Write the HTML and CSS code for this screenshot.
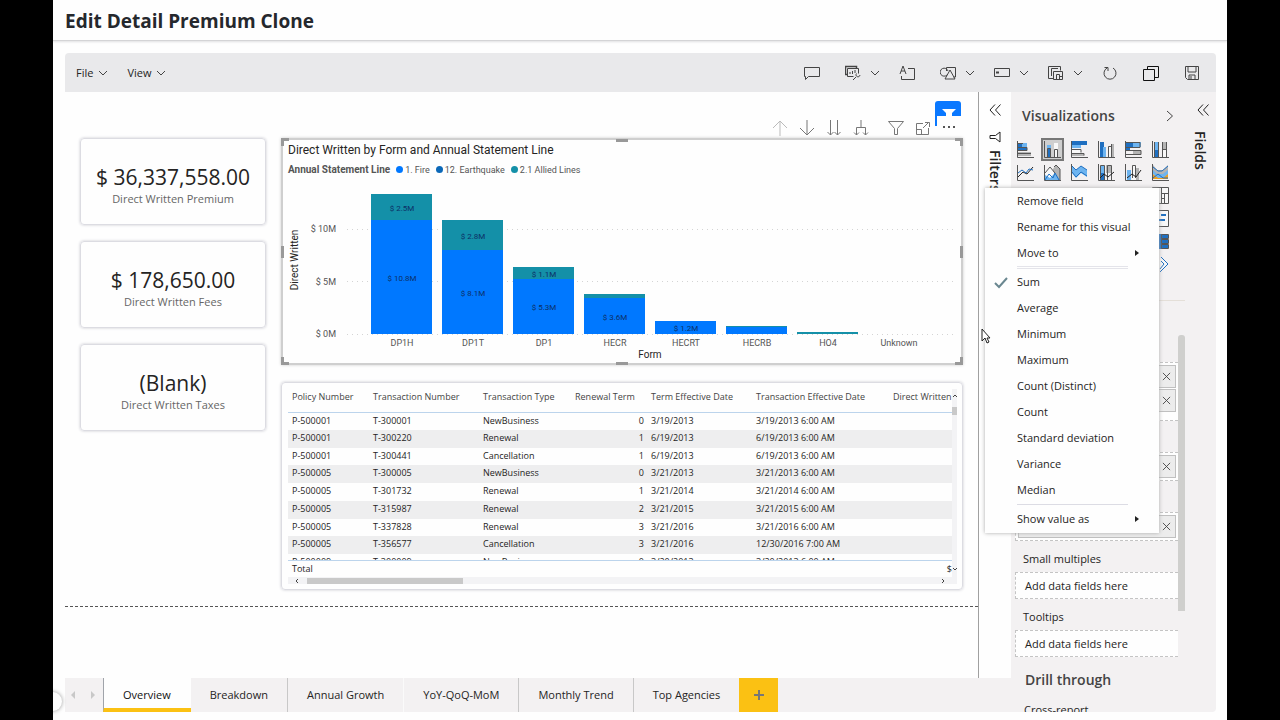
FILE: index.html
```html
<!DOCTYPE html>
<html lang="en">
<head>
    <meta charset="UTF-8">
    <title>Edit Detail Premium Clone</title>
    <link rel="stylesheet" href="styles.css">
</head>
<body>

<svg class="defs" width="0" height="0" aria-hidden="true">
    <symbol id="chev-down" viewBox="0 0 10 6"><path d="M1 1l4 4 4-4"/></symbol>
    <symbol id="chev-double" viewBox="0 0 12 12"><path d="M6 0.500L1 6l5 5.500M11.500 0.500L6.500 6l5 5.500"/></symbol>
    <symbol id="close" viewBox="0 0 10 10"><path d="M1 1l8 8M9 1l-8 8"/></symbol>
</svg>

<div class="page">
    <header class="page-header">
        <h1>Edit Detail Premium Clone</h1>
    </header>

    <div class="editor">
        <div class="toolbar">
            <button class="menu-btn">File <svg class="chev"><use href="#chev-down"/></svg></button>
            <button class="menu-btn">View <svg class="chev"><use href="#chev-down"/></svg></button>
            <div class="tools">
                <button class="tool" aria-label="Comment">
                    <svg viewBox="0 0 16 16"><path d="M0.500 2.500h15v9h-11l-3 3v-3h-1z"/></svg>
                </button>
                <button class="tool drop" aria-label="Visual">
                    <svg viewBox="0 0 16 16"><path d="M3 9.500H0.500v-8h11v2" stroke-width="1.500"/><path d="M2.500 3.500h11v5M2.500 3.500v8h6M5 9V7M7.500 9V6M10 8V5M8 15l3-3M15 10a2 2 0 1 1-3.500-1.500"/></svg>
                    <svg class="chev"><use href="#chev-down"/></svg>
                </button>
                <button class="tool" aria-label="Text box">
                    <svg viewBox="0 0 16 16"><path d="M1 9l3-8 3 8M2 6h4M9 3.500h6.500v11h-13V11"/></svg>
                </button>
                <button class="tool drop" aria-label="Shapes">
                    <svg viewBox="0 0 16 16"><path d="M7 10a4 4 0 1 1 1-4M6.500 6V2.500h9V12h-2M10 5l-5 9h10z"/></svg>
                    <svg class="chev"><use href="#chev-down"/></svg>
                </button>
                <button class="tool drop" aria-label="Buttons">
                    <svg viewBox="0 0 16 16"><path d="M0.500 3.500h15v8h-15z"/><path d="M2 7.500h3" stroke-width="2"/></svg>
                    <svg class="chev"><use href="#chev-down"/></svg>
                </button>
                <button class="tool drop" aria-label="Visual interactions">
                    <svg viewBox="0 0 16 16"><path d="M5 13.500H0.500v-12h12v4M3.500 11V3.500H10"/><path d="M5.500 6.500h9v8h-9zM8.500 14V9.500h3V14M11.500 11.500h3"/></svg>
                    <svg class="chev"><use href="#chev-down"/></svg>
                </button>
                <button class="tool" aria-label="Refresh">
                    <svg viewBox="0 0 16 16"><path d="M5 3a6 6 0 1 0 6 0M2.500 2.500H6V6"/></svg>
                </button>
                <button class="tool" aria-label="Duplicate this page">
                    <svg class="dark" viewBox="0 0 16 16"><path d="M4.500 4V1.500h11v11H12M0.500 4.500h11v11h-11z"/></svg>
                </button>
                <button class="tool" aria-label="Save">
                    <svg viewBox="0 0 16 16"><path d="M1.500 1.500h13v13h-11l-2-2zM4 2v5h8V2M5 14v-4h6v4M7 11v3"/></svg>
                </button>
            </div>
        </div>

        <div class="workspace">
            <div class="left">
                <div class="stage">
                    <main class="report">
                        <div class="canvas">
                            <div class="cards">
                                <section class="card"><strong>$ 36,337,558.00</strong><span>Direct Written Premium</span></section>
                                <section class="card"><strong>$ 178,650.00</strong><span>Direct Written Fees</span></section>
                                <section class="card"><strong>(Blank)</strong><span>Direct Written Taxes</span></section>
                            </div>

                            <div class="visuals">
                                <div class="visual-header">
                                    <button class="dim" aria-label="Drill up"><svg viewBox="0 0 16 16"><path d="M8 16V1M1 8l7-7 7 7"/></svg></button>
                                    <button aria-label="Drill down"><svg viewBox="0 0 16 16"><path d="M8 0v15M1 8l7 7 7-7"/></svg></button>
                                    <button aria-label="Go to the next level"><svg viewBox="0 0 16 16"><path d="M4.500 0v15M1.500 12l3 3 3-3M11.500 0v15M8.500 12l3 3 3-3"/></svg></button>
                                    <button aria-label="Expand all down"><svg viewBox="0 0 16 16"><path d="M8 0v7M3.500 15V7.500h9V15M1 12.500l2.500 2.500L6 12.500M10 12.500l2.500 2.500 2.500-2.500"/></svg></button>
                                    <button class="spaced" aria-label="Filters on this visual"><svg viewBox="0 0 16 16"><path d="M0.500 1.500h15l-6 7v6h-3v-6z"/></svg></button>
                                    <button aria-label="Focus mode"><svg viewBox="0 0 16 16"><path d="M8 3.500H1.500v11h12V8M1.500 9.500h5v5M8 8l6-6M10 2.500h4.500V7"/></svg></button>
                                    <div class="bookmark">
                                        <svg viewBox="0 0 14 7"><path d="M0 0h14l-4 4v3H4V4z"/></svg>
                                        <button class="more" aria-label="More options"><i></i><i></i><i></i></button>
                                    </div>
                                </div>

                                <section class="chart">
                                    <i class="grip tl"></i><i class="grip tc"></i><i class="grip tr"></i>
                                    <i class="grip ml"></i><i class="grip mr"></i>
                                    <i class="grip bl"></i><i class="grip bc"></i><i class="grip br"></i>
                                    <h2>Direct Written by Form and Annual Statement Line</h2>
                                    <div class="legend">
                                        <b>Annual Statement Line</b>
                                        <span class="fire">1. Fire</span>
                                        <span class="quake">12. Earthquake</span>
                                        <span class="allied">2.1 Allied Lines</span>
                                    </div>
                                    <svg class="plot" viewBox="0 0 672 182">
                                        <g class="gridlines">
                                            <path d="M59 49.500h606M59 101.500h606M59 154.500h606"/>
                                        </g>
                                        <g class="axis end">
                                            <text x="48" y="52">$ 10M</text>
                                            <text x="48" y="105">$ 5M</text>
                                            <text x="48" y="157">$ 0M</text>
                                        </g>
                                        <g class="bar-allied">
                                            <rect x="83" y="14" width="61" height="26"/>
                                            <rect x="154" y="40" width="61" height="30"/>
                                            <rect x="225" y="87" width="61" height="12"/>
                                            <rect x="296" y="114" width="61" height="4"/>
                                            <rect x="438" y="146" width="61" height="1"/>
                                            <rect x="509" y="152" width="61" height="2"/>
                                        </g>
                                        <g class="bar-fire">
                                            <rect x="83" y="40" width="61" height="114"/>
                                            <rect x="154" y="70" width="61" height="84"/>
                                            <rect x="225" y="99" width="61" height="55"/>
                                            <rect x="296" y="118" width="61" height="36"/>
                                            <rect x="367" y="141" width="61" height="13"/>
                                            <rect x="438" y="147" width="61" height="7"/>
                                        </g>
                                        <g class="values">
                                            <text x="114" y="31">$ 2.5M</text>
                                            <text x="114" y="101">$ 10.8M</text>
                                            <text x="185" y="59">$ 2.8M</text>
                                            <text x="185" y="116">$ 8.1M</text>
                                            <text x="256" y="97">$ 1.1M</text>
                                            <text x="256" y="130">$ 5.3M</text>
                                            <text x="327" y="140">$ 3.6M</text>
                                            <text x="398" y="151">$ 1.2M</text>
                                        </g>
                                        <g class="axis">
                                            <text x="114" y="166">DP1H</text>
                                            <text x="185" y="166">DP1T</text>
                                            <text x="256" y="166">DP1</text>
                                            <text x="327" y="166">HECR</text>
                                            <text x="398" y="166">HECRT</text>
                                            <text x="469" y="166">HECRB</text>
                                            <text x="540" y="166">HO4</text>
                                            <text x="611" y="166">Unknown</text>
                                        </g>
                                        <text class="axis-title" x="362" y="178">Form</text>
                                        <text class="axis-title" transform="translate(10 80) rotate(-90)">Direct Written</text>
                                    </svg>
                                </section>

                                <section class="grid-visual">
                                    <div class="grid-main">
                                        <div class="table-clip">
                                            <table>
                                                <colgroup><col class="w-policy"><col class="w-trans"><col class="w-type"><col class="w-term"><col class="w-date"><col class="w-time"><col></colgroup>
                                                <thead>
                                                    <tr><th>Policy Number</th><th>Transaction Number</th><th>Transaction Type</th><th class="num head">Renewal Term</th><th>Term Effective Date</th><th>Transaction Effective Date</th><th class="last">Direct Written</th></tr>
                                                </thead>
                                                <tbody>
                                                    <tr><td>P-500001</td><td>T-300001</td><td>NewBusiness</td><td class="num">0</td><td>3/19/2013</td><td>3/19/2013 6:00 AM</td><td></td></tr>
                                                    <tr><td>P-500001</td><td>T-300220</td><td>Renewal</td><td class="num">1</td><td>6/19/2013</td><td>6/19/2013 6:00 AM</td><td></td></tr>
                                                    <tr><td>P-500001</td><td>T-300441</td><td>Cancellation</td><td class="num">1</td><td>6/19/2013</td><td>6/19/2013 6:00 AM</td><td></td></tr>
                                                    <tr><td>P-500005</td><td>T-300005</td><td>NewBusiness</td><td class="num">0</td><td>3/21/2013</td><td>3/21/2013 6:00 AM</td><td></td></tr>
                                                    <tr><td>P-500005</td><td>T-301732</td><td>Renewal</td><td class="num">1</td><td>3/21/2014</td><td>3/21/2014 6:00 AM</td><td></td></tr>
                                                    <tr><td>P-500005</td><td>T-315987</td><td>Renewal</td><td class="num">2</td><td>3/21/2015</td><td>3/21/2015 6:00 AM</td><td></td></tr>
                                                    <tr><td>P-500005</td><td>T-337828</td><td>Renewal</td><td class="num">3</td><td>3/21/2016</td><td>3/21/2016 6:00 AM</td><td></td></tr>
                                                    <tr><td>P-500005</td><td>T-356577</td><td>Cancellation</td><td class="num">3</td><td>3/21/2016</td><td>12/30/2016 7:00 AM</td><td></td></tr>
                                                    <tr><td>P-500009</td><td>T-300009</td><td>NewBusiness</td><td class="num">0</td><td>3/20/2013</td><td>3/20/2013 6:00 AM</td><td></td></tr>
                                                </tbody>
                                            </table>
                                        </div>
                                        <div class="total"><span>Total</span><span>$</span></div>
                                        <div class="hscroll">
                                            <svg viewBox="0 0 6 6"><path d="M4 1L2 3l2 2"/></svg>
                                            <i></i>
                                            <svg viewBox="0 0 6 6"><path d="M2 1l2 2-2 2"/></svg>
                                        </div>
                                    </div>
                                    <div class="vscroll">
                                        <svg viewBox="0 0 6 6"><path d="M1 4l2-2 2 2"/></svg>
                                        <i></i>
                                        <svg viewBox="0 0 6 6"><path d="M1 2l2 2 2-2"/></svg>
                                    </div>
                                </section>
                            </div>
                        </div>
                    </main>

                    <aside class="filters-pane">
                        <svg class="expand"><use href="#chev-double"/></svg>
                        <svg class="funnel" viewBox="0 0 12 12"><path d="M11 1v10L6.500 7.500H1v-3h5.500z"/></svg>
                        <h2>Filters</h2>
                    </aside>
                </div>

                <nav class="tabs">
                    <div class="tab-arrows">
                        <svg viewBox="0 0 6 8"><path d="M5 0v8L1 4z"/></svg>
                        <svg viewBox="0 0 6 8"><path d="M1 0v8l4-4z"/></svg>
                    </div>
                    <button class="active">Overview</button>
                    <button>Breakdown</button>
                    <button class="ruled">Annual Growth</button>
                    <button class="soft">YoY-QoQ-MoM</button>
                    <button class="ruled">Monthly Trend</button>
                    <button class="ruled">Top Agencies</button>
                    <button class="add" aria-label="New page"><svg viewBox="0 0 12 12"><path d="M6 1v10M1 6h10"/></svg></button>
                </nav>
            </div>

            <aside class="viz-pane">
                <div class="pane-title">
                    <h2>Visualizations</h2>
                    <svg viewBox="0 0 8 12"><path d="M1 1l5.500 5L1 11"/></svg>
                </div>
                <div class="viz-icons">
                    <!-- stacked bar -->
                    <svg viewBox="0 0 17 17"><path class="b" d="M1 3h6v3H1zM1 7h9v3H1z"/><path class="lb" d="M5 2h5v4H5z"/><path class="g" d="M1 11h13v4H1z"/><path class="k" d="M0.500 0v16.500H17M1 2.500h5M1 6.500h9v3H1M1 12.500h13"/></svg>
                    <!-- stacked column -->
                    <svg class="selected" viewBox="0 0 17 17"><path class="b" d="M3 7h4v9H3z"/><path class="lb" d="M3 4h4v4H3z"/><path class="w" d="M10 2h4v14h-4z"/><path class="k" d="M0.500 0v16.500H17M3.500 16V7.500h3V16M10.500 16V8.500h3V16"/></svg>
                    <!-- clustered bar -->
                    <svg viewBox="0 0 17 17"><path class="b" d="M1 0h15v4H1z"/><path class="lb" d="M1 4h9v3H1z"/><path class="w" d="M1 9h9v3H1z"/><path class="g" d="M1 12h12v3H1z"/><path class="k" d="M0.500 0v16.500H17M1 8.500h9v3M1 12.500h12v2"/></svg>
                    <!-- clustered column -->
                    <svg viewBox="0 0 17 17"><path class="b" d="M2 1h4v15H2z"/><path class="lb" d="M5 6h3v10H5z"/><path class="w" d="M10 6h3v10h-3z"/><path class="g" d="M13 3h3v13h-3z"/><path class="k" d="M0.500 0v16.500H17M10.500 16V5.500h3M13.500 16V3"/></svg>
                    <!-- 100% stacked bar -->
                    <svg viewBox="0 0 17 17"><path class="b" d="M1 1h7v5H1zM1 7h4v2H1z"/><path class="lb" d="M8 1h8v5H8z"/><path class="g" d="M8 10h8v4H8z"/><path class="k" d="M0.500 0v16.500H17M1 1.500h14v5H1M1 9.500h15v4H1"/></svg>
                    <!-- 100% stacked column -->
                    <svg viewBox="0 0 17 17"><path class="lb" d="M3 1h4v8H3z"/><path class="b" d="M3 9h4v7H3z"/><path class="g" d="M10 1h5v8h-5z"/><path class="w" d="M10 9h5v7h-5z"/><path class="k" d="M0.500 0v16.500H17M2.500 16V1M6.500 16V1M10.500 16V1M14.500 16V1M10 8.500h4"/></svg>
                    <!-- line -->
                    <svg viewBox="0 0 17 17"><path class="k" d="M0.500 1v15.500H17"/><path class="kk" d="M1 13l5-5 4 2 6-7"/><path class="bb" d="M1 9l4-3 4 3 3-4 4 1"/></svg>
                    <!-- area -->
                    <svg viewBox="0 0 17 17"><path class="g" d="M9 5l3-4 4 4v11H9z"/><path class="w" d="M1 9l5-6 5 7-5 6z"/><path class="lb" d="M1 11l5 3 5-5 5 7H1z"/><path class="k" d="M0.500 1v15.500H17M1 9l5-6 5 6M10 3l2-2 4 4v11"/><path class="bb" d="M1 16l4-6 4 4 2-5 4 7"/></svg>
                    <!-- stacked area -->
                    <svg viewBox="0 0 17 17"><path class="lb" d="M1 2l4 4 5-4 6 4v7l-6-4-5 5-4-5z"/><path class="bb" d="M1 8l4 5 5-5 6 4M1 2l4 4 5-4 6 4"/><path class="k" d="M0.500 0v16.500H17"/></svg>
                    <!-- line and stacked column -->
                    <svg viewBox="0 0 17 17"><path class="lb" d="M2 2h4v7H2z"/><path class="b" d="M2 9h4v7H2z"/><path class="g" d="M8 1h5v8H8z"/><path class="k" d="M0.500 0v16.500H17M2.500 16V1.500h4V16M9.500 16V1.500h4V16"/><path class="kk" d="M2 14l4-4 4 3 6-5"/></svg>
                    <!-- line and clustered column -->
                    <svg viewBox="0 0 17 17"><path class="lb" d="M2 6h4v10H2z"/><path class="w" d="M7 1h4v15H7z"/><path class="g" d="M11 4h3v12h-3z"/><path class="k" d="M0.500 0v16.500H17M7.500 14V1.500h3V14"/><path class="kk" d="M2 14l5-4 4 3 5-7"/></svg>
                    <!-- ribbon -->
                    <svg viewBox="0 0 17 17"><path class="g" d="M1 1l4 5h6l5-5v6l-5 5H5L1 7z"/><path class="o" d="M1 10l5 3h5l5-4v6H1z"/><path class="lb" d="M1 6l4 4h6l5-4v4l-5 4H6l-5-4z"/><path class="bb" d="M1 3l5 4h4l6-5M1 14l5-4 5 4h5"/><path class="k" d="M0.500 0v16.500H17"/></svg>
                    <svg class="last" viewBox="0 0 17 17"><path class="w" d="M1 1h15v15H1z"/><path class="k" d="M0.500 0.500h16v16h-16zM9.500 1v15M9.500 6.500h7M12.500 6v10M9 11.500h3"/></svg>
                    <svg class="last" viewBox="0 0 17 17"><path class="w" d="M1 1h15v15H1z"/><path class="k" d="M0.500 0.500h16v16h-16z"/><path class="b" d="M9 4h5v2H9zM7 9h6v2H7z"/></svg>
                    <svg class="last" viewBox="0 0 17 17"><path class="b" d="M7 1h9v15H7z"/><path class="k" d="M9.500 1.500h7v4h-7zM9.500 6.500h7v4h-7zM9.500 11.500h7v4h-7z"/></svg>
                    <svg class="last" viewBox="0 0 17 17"><path class="w" d="M9 2l7 6-7 7-6-7z"/><path class="bb" d="M9 1l7 7-8 8M9 5l3 3-4 5"/></svg>
                </div>

                <div class="wells">
                    <div class="well-list">
                        <div class="well first">
                            <div class="chip"><button aria-label="Remove"><svg><use href="#close"/></svg></button></div>
                            <div class="chip"><button aria-label="Remove"><svg><use href="#close"/></svg></button></div>
                        </div>
                        <div class="well">
                            <div class="chip"><button aria-label="Remove"><svg><use href="#close"/></svg></button></div>
                        </div>
                        <div class="well">
                            <div class="chip"><button aria-label="Remove"><svg><use href="#close"/></svg></button></div>
                        </div>
                        <h3>Small multiples</h3>
                        <div class="well empty">Add data fields here</div>
                        <h3>Tooltips</h3>
                        <div class="well empty">Add data fields here</div>
                        <h2>Drill through</h2>
                        <p>Cross-report</p>
                    </div>
                    <div class="scrollbar"></div>
                </div>
            </aside>

            <aside class="fields-pane">
                <svg class="expand"><use href="#chev-double"/></svg>
                <h2>Fields</h2>
            </aside>
        </div>

        <div class="context-menu">
            <button>Remove field</button>
            <button>Rename for this visual</button>
            <button class="sub">Move to</button>
            <hr class="double">
            <button class="checked"><svg viewBox="0 0 14 12"><path d="M1 6l4 4 8-9"/></svg>Sum</button>
            <button>Average</button>
            <button>Minimum</button>
            <button>Maximum</button>
            <button>Count (Distinct)</button>
            <button>Count</button>
            <button>Standard deviation</button>
            <button>Variance</button>
            <button>Median</button>
            <hr>
            <button class="sub">Show value as</button>
        </div>

        <svg class="cursor" viewBox="0 0 10 16"><path d="M1 1v12l3-3 2 5 2-1-2-4h3z"/></svg>
    </div>

    <div class="bubble"></div>
</div>

</body>
</html>
```

FILE: styles.css
```css
* {
    box-sizing: border-box;
}
body {
    margin: 0;
    background: #000;
    color: #252423;
    font-family: "Open Sans", "Noto Sans", sans-serif;
    font-size: 11px;
}
h1, h2, h3, p {
    margin: 0;
}
button {
    border: none;
    background: none;
    padding: 0;
    color: inherit;
    font: inherit;
    cursor: pointer;
}
svg {
    display: block;
    fill: none;
    stroke: #444;
}
.defs {
    position: absolute;
}
.page {
    position: relative;
    display: flex;
    flex-direction: column;
    height: 100vh;
    margin: 0 53px;
    overflow: hidden;
    background: #fefefe;
}
.page-header {
    flex: none;
    height: 41px;
    padding: 0 12px;
    border-bottom: 1px solid #d4d4d6;
    box-shadow: 0 1px 2px #e0e0e2;
}
h1 {
    font-size: 19px;
    line-height: 42px;
    color: #25282d;
}
.editor {
    position: relative;
    display: flex;
    flex: 1;
    flex-direction: column;
    min-height: 0;
    margin: 12px 11px 8px 12px;
}

/* toolbar */
.toolbar {
    display: flex;
    flex: none;
    align-items: center;
    height: 39px;
    padding: 0 3px 0 11px;
    border-radius: 4px 4px 0 0;
    background: #e9e9eb;
}
.menu-btn {
    display: flex;
    align-items: center;
    gap: 5px;
    margin-right: 19px;
}
.chev {
    width: 10px;
    height: 6px;
}
.tools {
    display: flex;
    margin-left: auto;
}
.tool {
    display: flex;
    align-items: center;
    gap: 9px;
    padding: 0 13px 0 12px;
}
.tool.drop {
    padding-right: 7px;
}
.tool svg:first-child {
    width: 16px;
    height: 16px;
}
.tool .dark {
    stroke: #111;
}

/* workspace */
.workspace {
    display: flex;
    flex: 1;
    min-height: 0;
}
.left {
    display: flex;
    flex: 1;
    flex-direction: column;
    min-width: 0;
}
.stage {
    display: flex;
    flex: 1;
    min-height: 0;
}
.report {
    flex: 1;
    min-width: 0;
    border-right: 1px solid #a0a0a0;
}
.canvas {
    display: flex;
    gap: 15px;
    padding: 0 15px 16px;
    border-bottom: 1px dashed #555;
}
.cards {
    display: flex;
    flex: none;
    flex-direction: column;
    gap: 16px;
    width: 186px;
    padding-top: 46px;
}
.card {
    display: flex;
    flex-direction: column;
    align-items: center;
    height: 87px;
    padding-top: 25px;
    border: 1px solid #dcdce2;
    border-radius: 4px;
    box-shadow: 0 0 3px #c8c8d0;
}
.card strong {
    font-size: 21px;
    font-weight: 400;
    line-height: 26px;
}
.card span {
    line-height: 18px;
    color: #666;
}
.visuals {
    flex: 1;
    min-width: 0;
}
.visual-header {
    display: flex;
    align-items: flex-end;
    gap: 11px;
    justify-content: flex-end;
    height: 46px;
    padding: 0 2px 2px 0;
}
.visual-header button svg {
    width: 16px;
    height: 16px;
    stroke: #777;
}
.visual-header .dim svg {
    stroke: #bbb;
}
.visual-header .spaced {
    margin-left: 8px;
}
.bookmark {
    display: flex;
    flex-direction: column;
    align-items: flex-end;
    width: 26px;
    height: 35px;
    margin-left: -7px;
    border-radius: 3px;
    background: linear-gradient(#0a78ff 25px, transparent 25px);
}
.bookmark svg {
    flex: none;
    width: 14px;
    height: 7px;
    margin: 8px 5px 0 0;
    fill: #fff;
    stroke: none;
}
.bookmark .more {
    display: flex;
    justify-content: center;
    gap: 3px;
    width: 24px;
    height: 20px;
    padding: 10px 0 0;
    background: #fefefe;
}
.more i {
    width: 2px;
    height: 2px;
    background: #555;
}

/* chart */
.chart {
    position: relative;
    height: 227px;
    padding: 2px 1px 0 5px;
    border: 2px solid #cfcfcf;
    box-shadow: 0 0 3px #ccc;
    font-family: Roboto, sans-serif;
}
.chart h2 {
    font-size: 12px;
    font-weight: 400;
    line-height: 16px;
}
.legend {
    display: flex;
    gap: 6px;
    padding-top: 5px;
    font-size: 9px;
    line-height: 14px;
    color: #555;
}
.legend b {
    font-size: 10px;
}
.legend span::before {
    content: "";
    display: inline-block;
    width: 7px;
    height: 7px;
    margin-right: 2px;
    border-radius: 50%;
    background: #0078ff;
}
.legend .quake::before {
    background: #0b68b8;
}
.legend .allied::before {
    background: #1490a8;
}
.plot {
    width: 100%;
    margin-top: 3px;
    overflow: visible;
}
.plot text {
    stroke: none;
    fill: #555;
    font-size: 9px;
    text-anchor: middle;
}
.plot .end text {
    text-anchor: end;
}
.plot .values text {
    fill: #0c2f66;
    font-size: 8px;
}
.plot .axis-title {
    fill: #252423;
    font-size: 10px;
}
.gridlines {
    stroke: #d4d4d4;
    stroke-dasharray: 1 4;
}
.bar-allied {
    fill: #1490a8;
    stroke: none;
}
.bar-fire {
    fill: #0078ff;
    stroke: none;
}
.grip {
    position: absolute;
    width: 8px;
    height: 8px;
    border: 0 solid #999;
}
.tl { top: -2px; left: -2px; border-width: 3px 0 0 3px; }
.tr { top: -2px; right: -2px; border-width: 3px 3px 0 0; }
.bl { bottom: -2px; left: -2px; border-width: 0 0 3px 3px; }
.br { right: -2px; bottom: -2px; border-width: 0 3px 3px 0; }
.tc, .bc { left: calc(50% - 6px); width: 12px; border-top-width: 3px; }
.tc { top: -1px; }
.bc { bottom: -7px; }
.ml, .mr { top: calc(50% - 6px); height: 12px; border-left-width: 3px; }
.ml { left: -2px; }
.mr { right: -7px; }

/* table */
.grid-visual {
    display: flex;
    margin-top: 17px;
    padding: 6px 5px 5px 6px;
    border: 1px solid #dcdce2;
    border-radius: 4px;
    box-shadow: 0 0 3px #c8c8d0;
    font-size: 9px;
}
.grid-main {
    flex: 1;
    min-width: 0;
}
.table-clip {
    height: 172px;
    overflow: hidden;
    border-bottom: 1px solid #bcd4ec;
}
table {
    width: 100%;
    border-collapse: collapse;
    table-layout: fixed;
    white-space: nowrap;
}
.w-policy { width: 81px; }
.w-trans { width: 110px; }
.w-type { width: 92px; }
.w-term { width: 76px; }
.w-date { width: 105px; }
.w-time { width: 129px; }
th, td {
    height: 18px;
    padding: 0 4px;
    line-height: 16px;
    text-align: left;
    vertical-align: top;
}
th {
    height: 23px;
    border-bottom: 1px solid #bcd4ec;
    font-weight: 400;
    color: #444;
}
.num {
    padding-right: 3px;
    text-align: right;
}
.num.head {
    padding-right: 15px;
}
th.last {
    padding-left: 12px;
}
tbody tr:nth-child(even) {
    background: #eeeeef;
}
tbody tr:nth-child(4n+3) td {
    height: 17px;
}
.total {
    display: flex;
    justify-content: space-between;
    padding-left: 4px;
    line-height: 16px;
}
.hscroll {
    display: flex;
    align-items: center;
    height: 7px;
    padding: 0 6px;
    background: #f3f3f5;
}
.hscroll i {
    width: 156px;
    height: 6px;
    margin: 0 auto 0 7px;
    background: #c9c9c9;
}
.hscroll svg, .vscroll svg {
    width: 6px;
    height: 6px;
}
.vscroll {
    display: flex;
    flex-direction: column;
    align-items: center;
    width: 5px;
    padding: 4px 0 12px;
    background: #f3f3f5;
}
.vscroll i {
    width: 5px;
    height: 8px;
    margin: 8px 0 auto;
    background: #c9c9c9;
}

/* collapsed panes */
.filters-pane, .fields-pane {
    display: flex;
    flex: none;
    flex-direction: column;
    align-items: center;
    width: 32px;
    padding-top: 12px;
}
.fields-pane {
    width: 31px;
    background: #f3f1f2;
    border-radius: 0 0 4px 0;
}
.expand {
    width: 12px;
    height: 12px;
    stroke: #222;
}
.fields-pane .expand {
    margin-left: 5px;
}
.funnel {
    width: 12px;
    height: 12px;
    margin: 15px 0 7px;
    stroke: #222;
}
.filters-pane h2, .fields-pane h2 {
    writing-mode: vertical-rl;
    font-size: 14px;
    font-weight: 600;
    line-height: 18px;
}
.fields-pane h2 {
    padding-top: 15px;
    margin-right: 2px;
}

/* page tabs */
.tabs {
    display: flex;
    flex: none;
    height: 34px;
    background: #f3f1f2;
}
.tab-arrows {
    display: flex;
    align-items: center;
    justify-content: space-between;
    width: 38px;
    padding: 0 7px 0 5px;
}
.tab-arrows svg {
    width: 6px;
    height: 8px;
    fill: #c8c8c8;
    stroke: none;
}
.tabs button {
    padding: 0 19px 2px;
}
.tabs .active {
    border-bottom: 4px solid #fbc113;
    border-left: 1px solid #a0a4aa;
    padding: 2px 20px 0 19px;
    background: #fefefe;
    color: #111;
}
.tabs .ruled {
    border-left: 1px solid #c8c8c8;
}
.tabs .soft {
    border-left: 1px solid #fafafa;
}
.tabs .add {
    width: 39px;
    padding: 0 14px;
    background: #fbc113;
}
.add svg {
    width: 12px;
    height: 12px;
    stroke: #777;
    stroke-width: 2;
}

/* visualizations */
.viz-pane {
    display: flex;
    flex: none;
    flex-direction: column;
    width: 174px;
    overflow: hidden;
    background: #f3f1f2;
}
.pane-title {
    display: flex;
    align-items: center;
    justify-content: space-between;
    padding: 12px 11px 0;
}
.pane-title svg {
    width: 8px;
    height: 12px;
}
.viz-pane h2 {
    font-size: 14px;
    font-weight: 600;
    line-height: 24px;
    color: #444;
}
.viz-icons {
    display: grid;
    grid-template-columns: repeat(6, 17px);
    gap: 6px 10px;
    padding: 13px 6px 27px;
}
.viz-icons svg {
    width: 17px;
    height: 17px;
    overflow: visible;
    stroke: none;
}
.viz-icons .selected {
    outline: 2px solid #777;
    outline-offset: 1px;
    background: #cfcfcf;
    box-shadow: 0 0 0 2px #cfcfcf;
}
.viz-icons .last {
    grid-column: 6;
}
.viz-icons .b { fill: #1f6fc0; }
.viz-icons .lb { fill: #6db4f0; }
.viz-icons .g { fill: #b4b4b4; }
.viz-icons .w { fill: #f8f8f8; }
.viz-icons .o { fill: #f0a020; }
.viz-icons .k { stroke: #555; }
.viz-icons .kk { stroke: #222; }
.viz-icons .bb { stroke: #1f6fc0; }
.wells {
    display: flex;
    flex: 1;
    min-height: 0;
    border-top: 1px solid #e4dfd8;
}
.well-list {
    flex: 1;
    padding-left: 4px;
    overflow: hidden;
}
.well {
    display: flex;
    flex-direction: column;
    gap: 1px;
    margin-top: 31px;
    padding: 2px;
    border: 1px dashed #c4c4c4;
    border-right: none;
    background: #fefefe;
}
.well.first {
    margin-top: 61px;
    padding-bottom: 8px;
}
.chip {
    display: flex;
    justify-content: flex-end;
    height: 23px;
    border: 1px solid #c0c0c0;
    background: #ececec;
}
.chip button {
    padding: 0 4px;
}
.chip svg {
    width: 9px;
    height: 9px;
}
.wells h3 {
    padding: 9px 0 4px 8px;
    font-size: 11px;
    font-weight: 400;
    line-height: 18px;
}
.well.empty {
    height: 27px;
    margin-top: 0;
    padding: 0 9px;
    line-height: 25px;
}
.wells h2 {
    padding: 11px 0 0 10px;
}
.wells p {
    padding: 10px 0 0 9px;
}
.scrollbar {
    width: 7px;
    height: 276px;
    margin-top: 34px;
    border-radius: 3px 3px 0 0;
    background: #cfcfcd;
}

/* overlays */
.context-menu {
    position: absolute;
    top: 135px;
    right: 57px;
    width: 174px;
    padding: 0 0 1px;
    background: #fefefe;
    box-shadow: 0 0 4px #aaa;
}
.context-menu button {
    position: relative;
    display: block;
    width: 100%;
    height: 26px;
    padding: 0 0 2px 32px;
    text-align: left;
}
.context-menu hr {
    width: 111px;
    height: 1px;
    margin: 1px 0 1px 32px;
    border: none;
    background: #dcdce4;
}
.context-menu hr.double {
    height: 3px;
    margin: 0 0 0 32px;
    border: solid #e4e4ea;
    border-width: 1px 0;
    background: none;
}
.sub::after {
    content: "";
    position: absolute;
    top: 10px;
    right: 20px;
    border: solid transparent;
    border-width: 3px 0 3px 4px;
    border-left-color: #222;
}
.checked svg {
    position: absolute;
    top: 8px;
    left: 9px;
    width: 14px;
    height: 12px;
    stroke: #6a8790;
    stroke-width: 2;
}
.cursor {
    position: absolute;
    top: 275px;
    right: 225px;
    width: 10px;
    height: 16px;
    fill: #fff;
    stroke: #222;
}
.bubble {
    position: absolute;
    bottom: 9px;
    left: -10px;
    width: 19px;
    height: 19px;
    border-radius: 50%;
    background: #fefefe;
    box-shadow: 0 0 4px #999;
}
```
